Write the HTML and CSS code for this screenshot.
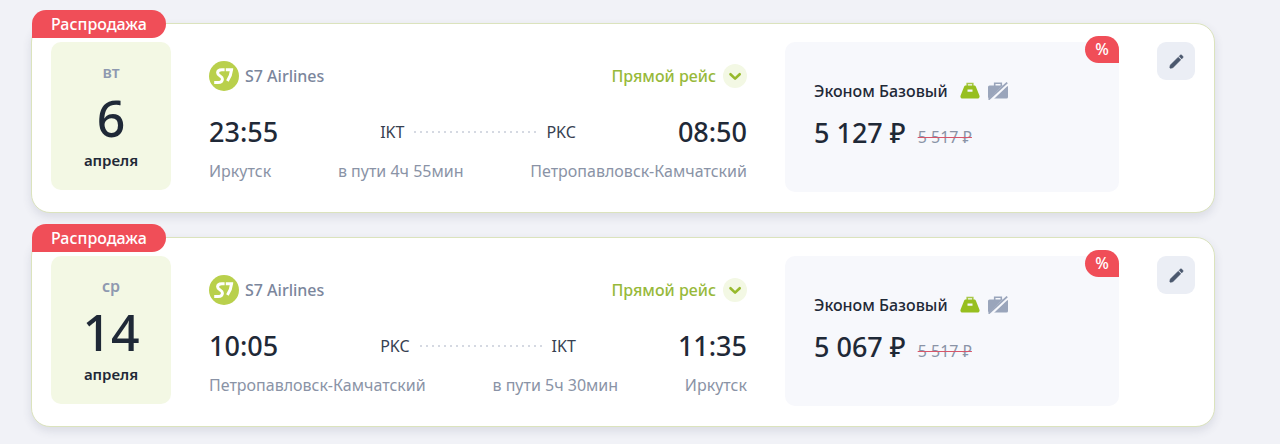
FILE: index.html
```html
<!DOCTYPE html>
<html lang="ru">
<head>
  <meta charset="UTF-8">
  <meta name="viewport" content="width=device-width, initial-scale=1">
  <title>Выбранные рейсы</title>
  <link rel="stylesheet" href="styles.css">
</head>
<body>
  <!-- Общие иконки -->
  <svg class="sprite" aria-hidden="true">
    <symbol id="logo-s7" viewBox="0 0 30 30">
      <circle cx="15" cy="15" r="15" fill="#b9d04c"/>
      <path d="M15.6 8.700h-2.800c-2.700 0-4.200 1.300-4.200 3.100 0 3.500 4.800 3 4.800 6.100 0 2.200-1.800 3.600-4.400 3.600H5.200" fill="none" stroke="#fff" stroke-width="3"/>
      <path d="M16.800 8.700h5.800c-.3 4-1.800 7.800-4.200 11.300" fill="none" stroke="#fff" stroke-width="3"/>
    </symbol>
    <symbol id="icon-chevron" viewBox="0 0 24 24">
      <path d="M7.500 10.200l4.600 4.400 4.600-4.400" fill="none" stroke="#97b92c" stroke-width="2.600" stroke-linecap="round" stroke-linejoin="round"/>
    </symbol>
    <symbol id="icon-bag" viewBox="0 0 20 18">
      <path d="M7.200 4.500V1.500h5.600v3" fill="none" stroke="#a9c84a" stroke-width="1.600"/>
      <path fill-rule="evenodd" d="M6 3.600h8c1 0 1.600.4 2 1.300l3.300 8.300c.8 2-.1 3.400-1.900 3.400H2.600c-1.800 0-2.700-1.400-1.900-3.400L4 4.900c.4-.9 1-1.300 2-1.300zM7.500 7.600v2.200h5V7.600z" fill="#97bf1f"/>
    </symbol>
    <symbol id="icon-no-luggage" viewBox="0 0 20 18">
      <path d="M6.700 4V1.300h6.600V4" fill="none" stroke="#9aa5bb" stroke-width="1.600"/>
      <rect y="3.500" width="20" height="13" rx="1.600" fill="#9aa5bb"/>
      <path d="M1.600 18.600L20.200.8" stroke="#f7f8fc" stroke-width="3.600"/>
      <path d="M.6 17.600L19.200.6" stroke="#9aa5bb" stroke-width="1.800"/>
    </symbol>
    <symbol id="icon-pencil" viewBox="0 0 18 18">
      <path d="M2.400 12.800l8.400-8.400 2.800 2.800-8.400 8.400-2 .6c-.9.200-1.500-.4-1.300-1.300zM11.700 3.500l1.200-1.200c.5-.5 1.200-.5 1.700 0l1.100 1.100c.5.5.5 1.200 0 1.700l-1.200 1.200z" fill="#4b586e" stroke="#4b586e" stroke-width=".5" stroke-linejoin="round"/>
    </symbol>
  </svg>

  <main class="flights">
    <article class="card">
      <span class="sale">Распродажа</span>
      <div class="date">
        <span class="weekday">вт</span>
        <span class="day">6</span>
        <span class="month">апреля</span>
      </div>
      <div class="info">
        <div class="row">
          <div class="airline">
            <svg class="logo" aria-hidden="true"><use href="#logo-s7"/></svg>
            <span>S7 Airlines</span>
          </div>
          <button type="button" class="details">
            Прямой рейс
            <svg class="chevron" aria-hidden="true"><use href="#icon-chevron"/></svg>
          </button>
        </div>
        <div class="row times">
          <time class="time">23:55</time>
          <div class="route"><span>IKT</span><span class="dots"></span><span>PKC</span></div>
          <time class="time">08:50</time>
        </div>
        <div class="row cities">
          <span>Иркутск</span>
          <span>в пути 4ч 55мин</span>
          <span>Петропавловск-Камчатский</span>
        </div>
      </div>
      <div class="fare">
        <span class="percent">%</span>
        <div class="fare-name">
          <span>Эконом Базовый</span>
          <svg class="luggage" role="img" aria-label="Ручная кладь"><use href="#icon-bag"/></svg>
          <svg class="luggage" role="img" aria-label="Без багажа"><use href="#icon-no-luggage"/></svg>
        </div>
        <div class="prices">
          <span class="price">5 127 ₽</span>
          <s class="old-price">5 517 ₽</s>
        </div>
      </div>
      <button type="button" class="edit" aria-label="Изменить">
        <svg class="pencil" aria-hidden="true"><use href="#icon-pencil"/></svg>
      </button>
    </article>

    <article class="card">
      <span class="sale">Распродажа</span>
      <div class="date">
        <span class="weekday">ср</span>
        <span class="day">14</span>
        <span class="month">апреля</span>
      </div>
      <div class="info">
        <div class="row">
          <div class="airline">
            <svg class="logo" aria-hidden="true"><use href="#logo-s7"/></svg>
            <span>S7 Airlines</span>
          </div>
          <button type="button" class="details">
            Прямой рейс
            <svg class="chevron" aria-hidden="true"><use href="#icon-chevron"/></svg>
          </button>
        </div>
        <div class="row times">
          <time class="time">10:05</time>
          <div class="route"><span>PKC</span><span class="dots"></span><span>IKT</span></div>
          <time class="time">11:35</time>
        </div>
        <div class="row cities">
          <span>Петропавловск-Камчатский</span>
          <span>в пути 5ч 30мин</span>
          <span>Иркутск</span>
        </div>
      </div>
      <div class="fare">
        <span class="percent">%</span>
        <div class="fare-name">
          <span>Эконом Базовый</span>
          <svg class="luggage" role="img" aria-label="Ручная кладь"><use href="#icon-bag"/></svg>
          <svg class="luggage" role="img" aria-label="Без багажа"><use href="#icon-no-luggage"/></svg>
        </div>
        <div class="prices">
          <span class="price">5 067 ₽</span>
          <s class="old-price">5 517 ₽</s>
        </div>
      </div>
      <button type="button" class="edit" aria-label="Изменить">
        <svg class="pencil" aria-hidden="true"><use href="#icon-pencil"/></svg>
      </button>
    </article>
  </main>
</body>
</html>
```
FILE: styles.css
```css
* {
  box-sizing: border-box;
  margin: 0;
  padding: 0;
}
body {
  font-family: "Segoe UI", "Noto Sans", sans-serif;
  font-size: 16px;
  line-height: 24px;
  background: #f1f2f7;
  color: #1f2937;
}
button {
  font: inherit;
  border: none;
  background: none;
  cursor: pointer;
}
.sprite {
  position: absolute;
  width: 0;
  height: 0;
}
.flights {
  display: grid;
  gap: 24px;
  padding: 23px 65px 17px 31px;
}

/* Карточка рейса */
.card {
  position: relative;
  display: flex;
  align-items: flex-start;
  gap: 38px;
  padding: 18px 19px 20px;
  background: #fff;
  border: 1px solid #dbe3bd;
  border-radius: 19px;
  box-shadow: 0 4px 10px rgba(50, 60, 90, 0.12);
}
.sale {
  position: absolute;
  top: -14px;
  left: 0;
  height: 28px;
  padding: 0 19px;
  line-height: 28px;
  font-weight: 500;
  color: #fff;
  background: #f04e58;
  border-radius: 15px 15px 15px 0;
}

/* Дата */
.date {
  display: flex;
  flex-direction: column;
  align-items: center;
  flex: 0 0 120px;
  height: 148px;
  padding-top: 18px;
  background: #f3f8e4;
  border-radius: 10px;
}
.weekday {
  color: #8e99b0;
  font-weight: 600;
}
.day {
  font-size: 50px;
  line-height: 68px;
  font-weight: 500;
}
.month {
  font-size: 15px;
  line-height: 16px;
  font-weight: 600;
}

/* Рейс */
.info {
  flex: 1;
  padding-top: 19px;
}
.row {
  display: flex;
  justify-content: space-between;
  align-items: center;
}
.airline {
  display: flex;
  align-items: center;
  gap: 6px;
  font-weight: 500;
  color: #7b869c;
}
.logo {
  width: 30px;
  height: 30px;
}
.details {
  display: flex;
  align-items: center;
  gap: 7px;
  font-weight: 500;
  color: #97b93a;
}
.chevron {
  width: 24px;
  height: 24px;
  background: #f3f8e4;
  border-radius: 50%;
}
.times {
  margin-top: 22px;
}
.time {
  font-size: 27px;
  line-height: 38px;
  font-weight: 500;
}
.route {
  display: flex;
  align-items: center;
  gap: 8px;
  color: #374151;
}
.dots {
  width: 126px;
  height: 2px;
  background: radial-gradient(circle, #d5d9e2 1px, transparent 1px) 0 0 / 6px 2px repeat-x;
}
.cities {
  margin-top: 8px;
  color: #8a93a6;
}

/* Тариф */
.fare {
  position: relative;
  flex: 0 0 334px;
  height: 150px;
  padding: 37px 29px 0;
  background: #f7f8fc;
  border-radius: 10px;
}
.percent {
  position: absolute;
  top: -6px;
  right: 0;
  width: 34px;
  height: 27px;
  line-height: 27px;
  text-align: center;
  font-weight: 500;
  color: #fff;
  background: #f04e58;
  border-radius: 14px 14px 0 14px;
}
.fare-name {
  display: flex;
  align-items: center;
  gap: 8px;
  font-weight: 500;
}
.fare-name span {
  margin-right: 4px;
}
.luggage {
  width: 20px;
  height: 18px;
}
.prices {
  display: flex;
  align-items: baseline;
  gap: 12px;
  margin-top: 11px;
}
.price {
  font-size: 27px;
  line-height: 38px;
  font-weight: 500;
}
.old-price {
  color: #8a93a6;
  text-decoration: line-through #d8566a 1px;
}

.edit {
  display: grid;
  place-items: center;
  flex: 0 0 38px;
  height: 38px;
  background: #ebeef5;
  border-radius: 9px;
}
.pencil {
  width: 17px;
  height: 17px;
}
```
